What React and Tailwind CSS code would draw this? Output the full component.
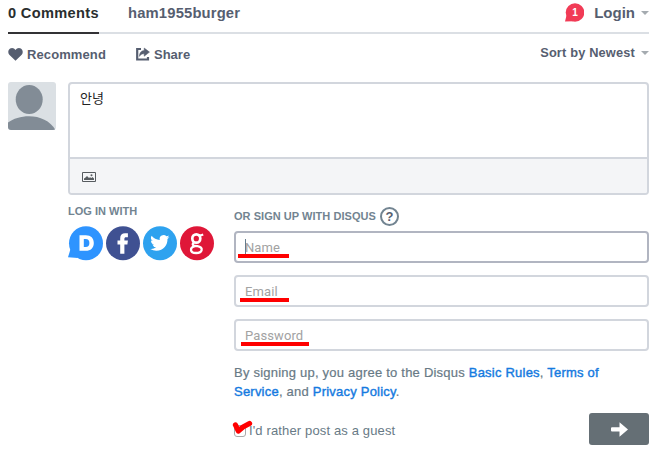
import React from "react";

function Caret() {
  return (
    <svg width="8" height="4" viewBox="0 0 8 4" className="shrink-0">
      <path d="M0 0h8L4 4z" fill="#a5abb0" />
    </svg>
  );
}

function Header() {
  return (
    <header className="flex h-[34px] justify-between border-b-2 border-[#dbdfe4] text-[15px] leading-[18px] font-bold text-[#565e70]">
      <nav className="flex">
        <div className="h-[34px] w-[91px] border-b-2 border-[#333235] pt-1 text-[14.6px] tracking-[0.33px] whitespace-nowrap text-[#2a2e2e]">
          0 Comments
        </div>
        <div className="pt-1 pl-[29px] text-[14.8px] tracking-[0.15px]">ham1955burger</div>
      </nav>
      <div className="flex h-[26px] items-center">
        <div className="relative mr-[10px] h-5 w-5">
          <svg width="20" height="20" viewBox="0 0 20 20" className="block">
            <circle cx="11" cy="9.500" r="9.300" fill="#f13b56" />
            <path d="M2.500 12.500L1 18.500l8.600-.3z" fill="#f13b56" />
          </svg>
          <span className="absolute top-[1px] left-[8px] text-[10px] leading-[18px] text-white">1</span>
        </div>
        <span className="mr-[6px]">Login</span>
        <Caret />
      </div>
    </header>
  );
}

function Actions() {
  return (
    <div className="flex h-12 justify-between text-[13px] leading-4 font-bold text-[#565e70]">
      <div className="flex pt-[13px]">
        <svg width="15" height="13" viewBox="0 0 15 13" className="mt-[1px] mr-1">
          <path d="M7.5 12.8L1.3 6.7C-.4 4.8.1 1.8 2.1.6 4.1-.5 6.3.2 7.5 2.1 8.7.2 10.9-.5 12.9.6c2 1.2 2.5 4.2.8 6.1z" fill="#565e70" />
        </svg>
        <span className="w-[109px] tracking-[0.1px]">Recommend</span>
        <svg width="14" height="14" viewBox="0 0 14 14" className="mr-1">
          <path d="M5 2H1.200v10.500h10.800v-2.500" fill="none" stroke="#565e70" strokeWidth="2.200" />
          <path d="M8.200 1l5.300 4.100-5.300 4.100V6.800C5.800 6.700 4.600 7.600 3.400 9.400 3.500 5.800 5 3.600 8.200 3.400z" fill="#565e70" stroke="#565e70" strokeWidth=".5" />
        </svg>
        <span>Share</span>
      </div>
      <div className="flex h-[38px] items-center gap-[6px]">
        <span className="text-[12.8px] tracking-[0.17px]">Sort by Newest</span>
        <Caret />
      </div>
    </div>
  );
}

function Editor() {
  return (
    <section className="flex gap-3">
      <svg width="48" height="48" viewBox="0 0 48 48" className="shrink-0 rounded-[3px]">
        <path d="M0 0h48v48H0z" fill="#dbe0e4" />
        <ellipse cx="21.200" cy="17.400" rx="13.500" ry="14.500" fill="#828c96" />
        <path d="M0 48v-7.500C5 36.500 13 34.200 21 34.200c11 0 21 4.500 26.500 13.800z" fill="#828c96" />
      </svg>
      <div className="h-[113px] flex-1 overflow-hidden rounded-[4px] border-2 border-[#d2d6dd]">
        <div className="h-[73px] px-[10px] pt-[5px] font-['Liberation_Sans','Noto_Sans_CJK_KR',sans-serif] text-[13px] leading-[20px] text-[#222222]">안녕</div>
        <div className="flex h-[38px] items-center border-t-2 border-[#d2d6dd] bg-[#f4f5f7] pl-3">
          <svg width="14" height="10" viewBox="0 0 14 10">
            <path d="M.5.5h13v9H.5z" fill="none" stroke="#565b5f" />
            <path d="M2 8V6.500L3.500 5.500 5 4l2 2 1-.8L9.500 6l1-1L12 6.500V8z" fill="#565b5f" />
            <circle cx="9.500" cy="3.300" r="1" fill="#565b5f" />
          </svg>
        </div>
      </div>
    </section>
  );
}

function SocialLogins() {
  return (
    <div className="w-[166px] pt-[9px]">
      <h6 className="text-[11px] leading-[14px] font-bold tracking-[0.02px] text-[#728491]">LOG IN WITH</h6>
      <div className="mt-[8px] flex gap-[3px]">
        <svg width="35" height="35" viewBox="0 0 35 35">
          <circle cx="18" cy="17.200" r="17" fill="#2e94ff" />
          <path d="M2.500 23L0 31.300l10 .8z" fill="#2e94ff" />
          <path fillRule="evenodd" d="M11.500 9.200h6.300c5.200 0 8 3 8 7.700s-3 7.900-8.100 7.900h-6.200zm4.300 3.800v8h2c2.300 0 3.600-1.400 3.600-4s-1.300-4-3.600-4z" fill="#fff" />
        </svg>
        <svg width="34" height="35" viewBox="0 0 34 35">
          <circle cx="17" cy="17.200" r="17" fill="#3f5192" />
          <path d="M14.200 27.700v-9.200h-2.700v-3.900h2.700v-2.300c0-3.300 1.800-5 4.900-5h2.800v3.900h-1.800c-1.300 0-1.700.6-1.700 1.700v1.700h3.500l-.5 3.900h-3v9.200z" fill="#fff" />
        </svg>
        <svg width="34" height="35" viewBox="0 0 34 35">
          <circle cx="17" cy="17.200" r="17" fill="#2ea2ef" />
          <g transform="translate(7.300 7.300) scale(.8)">
            <path d="M23.950 4.570a10 10 0 0 1-2.820.77 4.960 4.960 0 0 0 2.160-2.720 9.900 9.900 0 0 1-3.120 1.190 4.920 4.920 0 0 0-8.380 4.480A14 14 0 0 1 1.640 3.160a4.920 4.920 0 0 0 1.520 6.570 4.900 4.900 0 0 1-2.230-.61v.06a4.920 4.920 0 0 0 3.950 4.830 5 5 0 0 1-2.210.08 4.940 4.940 0 0 0 4.600 3.420A9.870 9.870 0 0 1 0 19.540a14 14 0 0 0 7.550 2.210c9.140 0 14.300-7.720 13.920-14.640a10 10 0 0 0 2.480-2.540z" fill="#fff" />
          </g>
        </svg>
        <svg width="34" height="35" viewBox="0 0 34 35">
          <circle cx="17" cy="17.200" r="17" fill="#df1738" />
          <g fill="none" stroke="#fff">
            <ellipse cx="16.300" cy="12.500" rx="4" ry="4.200" strokeWidth="2.700" />
            <path d="M18.500 9.300c1.500.4 2.700 0 4.700-.8" strokeWidth="2.200" />
            <path d="M14 16.500c-2 1.300-1.500 3 .5 3.300l3 .4c6.500.9 5 6.800-1.300 6.800-6.700 0-6.700-5.500-1.200-6.800" strokeWidth="2.300" />
          </g>
        </svg>
      </div>
    </div>
  );
}

function Field({ label, focused = false, mark }) {
  return (
    <div className={"relative flex h-8 items-center rounded-[4px] border-2 pt-px pl-[9px] " + (focused ? "border-[#b1b5c1]" : "border-[#d2d6dd]")}>
      <span className="font-[Roboto,sans-serif] text-[13px] leading-[17px] tracking-[0.1px] text-[#a2a2a2]">{label}</span>
      {focused && <span className="absolute top-[6px] left-[9px] h-[15px] w-px bg-[#657c8c]" />}
      <span className={"absolute h-1 bg-[#ff0000] " + mark} />
    </div>
  );
}

function SignUp() {
  return (
    <div className="flex-1 pt-[11px] text-[13px] text-[#687a86]">
      <div className="flex h-5 items-center text-[11px] font-bold tracking-[0.04px] text-[#728491]">
        <span className="w-[146px] whitespace-nowrap">OR SIGN UP WITH DISQUS</span>
        <span className="flex h-[19px] w-[19px] items-center justify-center rounded-full border-2 border-[#728491] text-[13px] leading-none text-[#565e70]">?</span>
      </div>
      <div className="mt-[5px] flex flex-col gap-3">
        <Field label="Name" focused mark="top-[21px] left-[2px] w-[51px]" />
        <Field label="Email" mark="top-[21px] left-[4px] w-[49px]" />
        <Field label="Password" mark="top-[21px] left-[5px] w-[68px]" />
      </div>
      <p className="mt-[12px] leading-[19px] tracking-[0.22px] [-webkit-text-stroke:0.2px]">
        By signing up, you agree to the Disqus <a className="text-[#157ae0] [-webkit-text-stroke:0.4px]">Basic Rules</a>,{" "}
        <a className="text-[#157ae0] [-webkit-text-stroke:0.4px]">Terms of<br />Service</a>, and{" "}
        <a className="text-[#157ae0] [-webkit-text-stroke:0.4px]">Privacy Policy</a>.
      </p>
      <div className="mt-3 flex justify-between">
        <div className="relative flex h-[35px] items-center">
          <span className="mr-[3px] h-3 w-3 rounded-[3px] border border-[#aaaaaa] bg-white" />
          <span className="tracking-[0.14px]">I'd rather post as a guest</span>
          <svg width="21" height="17" viewBox="0 0 21 17" className="absolute top-[6px] left-[-2px]">
            <path d="M3.500 6l2.800 6L11 8l6.500-3.500" fill="none" stroke="#ff0000" strokeWidth="5.300" strokeLinecap="round" strokeLinejoin="round" />
          </svg>
        </div>
        <button className="flex h-8 w-[60px] items-center justify-center rounded-[3px] bg-[#656f75]">
          <svg width="17" height="15" viewBox="0 0 17 15">
            <path d="M1 5.300h7.500V.2L17 7.500l-8.500 7.300V9.500H1q-1 0-1-1V6.300q0-1 1-1z" fill="#fff" />
          </svg>
        </button>
      </div>
    </div>
  );
}

export default function App() {
  return (
    <main className="h-[452px] w-[658px] overflow-hidden bg-white pr-[9px] pl-2 font-['Liberation_Sans',Arial,sans-serif]">
      <Header />
      <Actions />
      <Editor />
      <section className="ml-[60px] flex">
        <SocialLogins />
        <SignUp />
      </section>
    </main>
  );
}
